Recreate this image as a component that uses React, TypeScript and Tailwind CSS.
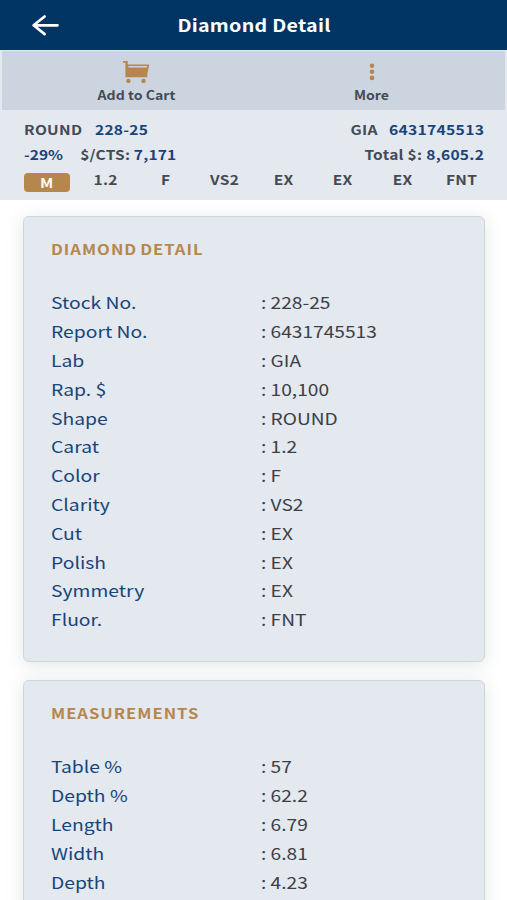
import { ReactNode } from 'react'

const summary = ['1.2', 'F', 'VS2', 'EX', 'EX', 'EX', 'FNT']

const diamondDetail = [
  { label: 'Stock No.', value: '228-25' },
  { label: 'Report No.', value: '6431745513' },
  { label: 'Lab', value: 'GIA' },
  { label: 'Rap. $', value: '10,100' },
  { label: 'Shape', value: 'ROUND' },
  { label: 'Carat', value: '1.2' },
  { label: 'Color', value: 'F' },
  { label: 'Clarity', value: 'VS2' },
  { label: 'Cut', value: 'EX' },
  { label: 'Polish', value: 'EX' },
  { label: 'Symmetry', value: 'EX' },
  { label: 'Fluor.', value: 'FNT' },
]

const measurements = [
  { label: 'Table %', value: '57' },
  { label: 'Depth %', value: '62.2' },
  { label: 'Length', value: '6.79' },
  { label: 'Width', value: '6.81' },
  { label: 'Depth', value: '4.23' },
]

function BackIcon() {
  return (
    <svg className="h-[22px] w-7" viewBox="0 0 28 22" fill="none" stroke="#fff" strokeWidth="2.7" strokeLinecap="round" strokeLinejoin="round">
      <path d="M26.5 11.3H2.8M13.6 2.5L2.6 11.3L13.6 20.1" />
    </svg>
  )
}

function CartIcon() {
  return (
    <svg className="h-6 w-7" viewBox="0 0 28 24" fill="#b5874d">
      <path fillRule="evenodd" d="M1 1h4.7v3.4h21.6l-2 9.7v3.1H3.4V2.7H1zM6.4 6.1v1.4h18.4l.3-1.4z" />
      <circle cx="6.4" cy="20.9" r="2.2" />
      <circle cx="21.5" cy="20.9" r="2.2" />
    </svg>
  )
}

function DotsIcon() {
  return (
    <svg className="h-6 w-7" viewBox="0 0 28 24" fill="#b5874d">
      <circle cx="14" cy="5.7" r="2.3" />
      <circle cx="14" cy="11.8" r="2.3" />
      <circle cx="14" cy="17.9" r="2.3" />
    </svg>
  )
}

function Action({ icon, label }: { icon: ReactNode, label: string }) {
  return (
    <button className="flex w-[236px] flex-col items-center pt-[9px]">
      {icon}
      <span className="mt-0.5 scale-x-[1.13] text-[12.5px] leading-[18px] font-bold text-[#454b54]">{label}</span>
    </button>
  )
}

function DetailCard({ title, rows }: { title: string, rows: { label: string, value: string }[] }) {
  return (
    <section className="rounded-md border border-[#cfd6d9] bg-[#e4e8ef] px-[27px] pt-5 pb-[27px] shadow-[0_3px_18px_rgba(60,80,80,0.15)]">
      <h2 className="mb-[27.4px] h-6 origin-left scale-x-[1.17] text-[14.2px] leading-6 font-bold tracking-[0.85px] text-[#b5874d] [word-spacing:-1.5px]">{title}</h2>
      {rows.map(({ label, value }) => (
        <div key={label} className="flex h-[28.8px] text-[16.5px] leading-[28.8px]">
          <span className="w-[210px] origin-left scale-x-[1.17] text-[#17457a]">{label}</span>
          <span className="origin-left scale-x-[1.16] text-[#3b4047]">: {value}</span>
        </div>
      ))}
    </section>
  )
}

export default function App() {
  return (
    <main className="h-[900px] w-[507px] overflow-hidden bg-white font-['Noto_Sans_CJK_SC','Noto_Sans',sans-serif]">
      <header className="grid h-[50px] grid-cols-[100px_1fr_100px] items-center bg-[#003463]">
        <button className="pl-[31px]"><BackIcon /></button>
        <h1 className="scale-x-[1.155] pl-px text-center text-[17px] leading-6 font-bold tracking-[0.25px] text-white">Diamond Detail</h1>
      </header>
      <div className="h-[150px] bg-[#e4e8ef]">
        <nav className="mx-[2px] flex h-[60px] border-t border-[#e4e8ef] bg-[#ccd5df]">
          <div className="pl-4"><Action icon={<CartIcon />} label="Add to Cart" /></div>
          <Action icon={<DotsIcon />} label="More" />
        </nav>
        <div className="px-6 pt-[7px] text-[13.5px] leading-[25px] font-bold tracking-[0.25px] text-[#454b54]">
          <div className="flex justify-between">
            <p className="flex origin-left scale-x-[1.15] gap-[11px]"><span>ROUND</span><span className="text-[#17457a]">228-25</span></p>
            <p className="-mr-px flex origin-right scale-x-[1.16] gap-[9.5px]"><span>GIA</span><span className="text-[#17457a]">6431745513</span></p>
          </div>
          <div className="flex justify-between">
            <p className="flex origin-left scale-x-[1.15] gap-[15px]"><span className="tracking-normal text-[#17457a]">-29%</span><span className="tracking-[0.15px]">$/CTS: <span className="text-[#17457a]">7,171</span></span></p>
            <p className="-mr-px origin-right scale-x-[1.15]">Total $: <span className="text-[#17457a]">8,605.2</span></p>
          </div>
          <div className="-mr-2 -ml-[7px] grid grid-cols-8 text-center">
            <div className="mx-auto mt-[6px] h-[19px] w-[46px] rounded-[4px] bg-[#b5874d] leading-[19px] text-white">
              <span className="inline-block scale-x-[1.15]">M</span>
            </div>
            {summary.map((item, i) => (
              <span key={i} className="scale-x-[1.15]">{item}</span>
            ))}
          </div>
        </div>
      </div>
      <div className="flex flex-col gap-[18px] pt-4 pr-[22px] pl-[23px]">
        <DetailCard title="DIAMOND DETAIL" rows={diamondDetail} />
        <DetailCard title="MEASUREMENTS" rows={measurements} />
      </div>
    </main>
  )
}
